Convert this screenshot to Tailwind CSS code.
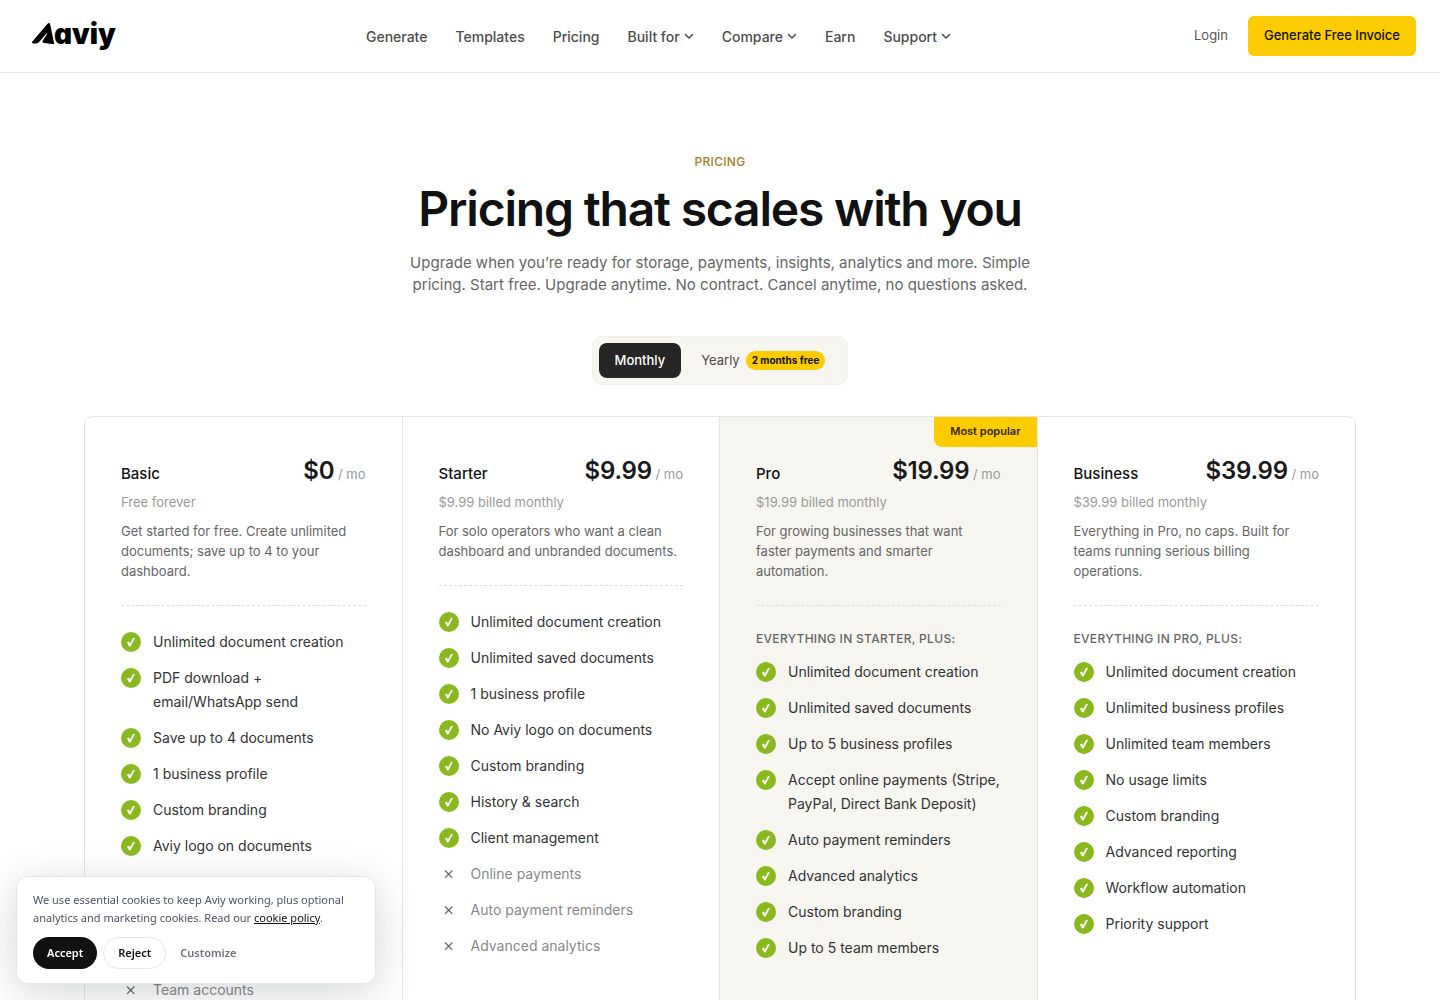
<!DOCTYPE html>
<html lang="en">
<head>
    <meta charset="UTF-8">
    <meta name="viewport" content="width=device-width, initial-scale=1.0">
    <title>Pricing - Aaviy</title>
    <script src="https://cdn.jsdelivr.net/npm/@tailwindcss/browser@4"></script>
</head>
<body class="bg-white font-[Inter,sans-serif] text-[#111111] overflow-x-hidden">
    <!-- shared icons -->
    <svg class="hidden">
        <symbol id="check" viewBox="0 0 20 20">
            <circle cx="10" cy="10" r="10" fill="#8ab81f"/>
            <path d="M5.9 10.5 7.9 9.6 9 11.4 11.7 6.4Q12.5 5.3 14 5.9L9.7 13.9Q8.8 15 7.9 13.9Z" fill="#fff"/>
        </symbol>
        <symbol id="cross" viewBox="0 0 20 20">
            <path d="M6 6.5 13.4 13.9M13.4 6.5 6 13.9" fill="none" stroke="#666" stroke-width="1.3"/>
        </symbol>
        <symbol id="chevron" viewBox="0 0 10 10">
            <path d="M1.5 2.5 5 6 8.5 2.5" fill="none" stroke="#4d4d4d" stroke-width="1.5" stroke-linecap="round" stroke-linejoin="round"/>
        </symbol>
    </svg>

    <!-- header -->
    <header class="h-[73px] border-b border-[#e5e5e5] flex items-center justify-between pl-8 pr-6">
        <a href="#" aria-label="Aaviy">
            <svg class="h-10 w-[91px] overflow-visible" viewBox="0 0 91 40">
                <path d="M.2 25.8 15.5 7.8Q17.7 6 18.2 8.5L22.3 28.3 12 26.9Q9.6 26.5 11 24.2L14.8 18.4Q15.8 16.5 14.2 17.8L7.4 25.8Q5.9 27.5 4 27.4L1 27.4Q-.6 27.2 .2 25.8Z" fill="#000"/>
                <text x="22" y="28" font-size="28" font-weight="900" font-family="Inter, sans-serif" class="[font-feature-settings:'cv11']">aviy</text>
            </svg>
        </a>
        <nav class="flex items-center gap-7 pt-0.5 text-sm font-medium text-[#4d4d4d]">
            <a href="#">Generate</a>
            <a href="#">Templates</a>
            <a href="#">Pricing</a>
            <button class="flex items-center gap-1">Built for <svg class="size-[10px]"><use href="#chevron"/></svg></button>
            <button class="flex items-center gap-1">Compare <svg class="size-[10px]"><use href="#chevron"/></svg></button>
            <a href="#">Earn</a>
            <button class="flex items-center gap-1">Support <svg class="size-[10px]"><use href="#chevron"/></svg></button>
        </nav>
        <div class="flex items-center gap-5 text-[13px]">
            <a href="#" class="text-[#555555]">Login</a>
            <a href="#" class="flex h-10 items-center rounded-md bg-[#fccb00] px-4 font-medium">Generate Free Invoice</a>
        </div>
    </header>
    <!-- end of header -->

    <main class="px-[84px] pt-20">
        <!-- intro -->
        <div class="flex flex-col items-center text-center">
            <p class="text-xs leading-[18px] font-medium tracking-wide text-[#a67c1a]">PRICING</p>
            <h1 class="mt-3 text-5xl leading-[52px] font-semibold tracking-tight">Pricing that scales with you</h1>
            <p class="mt-[17px] max-w-[640px] text-[15px] leading-[22px] text-[#666666]">Upgrade when you’re ready for storage, payments, insights, analytics and more. Simple pricing. Start free. Upgrade anytime. No contract. Cancel anytime, no questions asked.</p>
            <div class="mt-10 flex h-[49px] items-center rounded-[10px] border border-[#f3f1eb] bg-[#f6f5f0] px-1.5 text-[13px]">
                <button class="h-[35px] rounded-lg bg-[#262626] px-4 font-medium text-white">Monthly</button>
                <button class="flex h-[35px] items-center gap-1.5 pl-5 pr-4 text-[#4d4d4d]">Yearly
                    <span class="rounded-full bg-[#fccb00] px-1.5 text-[10px] leading-[19px] font-bold text-[#111111]">2 months free</span>
                </button>
            </div>
        </div>
        <!-- end of intro -->

        <!-- plans -->
        <div class="mt-[31px] grid grid-cols-4 divide-x divide-[#e5e5e5] overflow-hidden rounded-t-lg border border-[#e5e5e5]" id="plans"></div>
        <!-- end of plans -->
    </main>

    <!-- cookie box -->
    <div class="fixed bottom-4 left-4 w-[360px] rounded-xl border border-gray-200 bg-white px-4 py-3.5 font-['Noto_Sans',sans-serif] text-[11px] shadow-[0_8px_40px_rgba(17,24,39,0.18)]">
        <p class="leading-[18px] text-gray-600">We use essential cookies to keep Aviy working, plus optional analytics and marketing cookies. Read our <a href="#" class="text-[#111111] underline">cookie policy</a>.</p>
        <div class="mt-2.5 flex gap-1.5 font-semibold">
            <button class="h-8 rounded-full bg-[#111111] px-3.5 text-white">Accept</button>
            <button class="h-8 rounded-full border border-gray-200 px-3.5">Reject</button>
            <button class="h-8 px-2 text-gray-500">Customize</button>
        </div>
    </div>
    <!-- end of cookie box -->

    <script>
        const plans = [
            {
                name: 'Basic', price: '$0', billed: 'Free forever',
                text: 'Get started for free. Create unlimited documents; save up to 4 to your dashboard.',
                yes: ['Unlimited document creation', 'PDF download + email/WhatsApp send', 'Save up to 4 documents', '1 business profile', 'Custom branding', 'Aviy logo on documents'],
                no: ['Online payments', 'Auto payment reminders', 'Advanced analytics', 'Team accounts']
            },
            {
                name: 'Starter', price: '$9.99', billed: '$9.99 billed monthly',
                text: 'For solo operators who want a clean dashboard and unbranded documents.',
                yes: ['Unlimited document creation', 'Unlimited saved documents', '1 business profile', 'No Aviy logo on documents', 'Custom branding', 'History & search', 'Client management'],
                no: ['Online payments', 'Auto payment reminders', 'Advanced analytics']
            },
            {
                name: 'Pro', price: '$19.99', billed: '$19.99 billed monthly', popular: true,
                text: 'For growing businesses that want faster payments and smarter automation.',
                plus: 'EVERYTHING IN STARTER, PLUS:',
                yes: ['Unlimited document creation', 'Unlimited saved documents', 'Up to 5 business profiles', 'Accept online payments (Stripe, PayPal, Direct Bank Deposit)', 'Auto payment reminders', 'Advanced analytics', 'Custom branding', 'Up to 5 team members'],
                no: []
            },
            {
                name: 'Business', price: '$39.99', billed: '$39.99 billed monthly',
                text: 'Everything in Pro, no caps. Built for teams running serious billing operations.',
                plus: 'EVERYTHING IN PRO, PLUS:',
                yes: ['Unlimited document creation', 'Unlimited business profiles', 'Unlimited team members', 'No usage limits', 'Custom branding', 'Advanced reporting', 'Workflow automation', 'Priority support'],
                no: []
            }
        ];

        const row = (text, icon, color) => `
            <li class="flex gap-3 ${color}">
                <svg class="mt-0.5 size-5 shrink-0"><use href="#${icon}"/></svg>
                <span>${text}</span>
            </li>`;

        document.getElementById('plans').innerHTML = plans.map(p => `
            <section class="relative px-9 pt-9 pb-10 ${p.popular ? 'bg-[#f6f5f0]' : ''}">
                ${p.popular ? '<div class="absolute top-0 right-0 rounded-bl-lg bg-[#fccb00] px-4 pb-0.5 text-[11px] leading-7 font-semibold text-[#332900]">Most popular</div>' : ''}
                <div class="flex items-baseline justify-between">
                    <h2 class="text-[15px] font-medium">${p.name}</h2>
                    <div class="text-[13px] text-[#999999]"><span class="text-2xl leading-9 font-semibold tracking-[-0.01em] text-[#1a1a1a]">${p.price}</span> / mo</div>
                </div>
                <p class="mt-[3px] text-[13px] leading-5 text-[#999999]">${p.billed}</p>
                <p class="mt-[9px] text-[13px] leading-5 text-[#666666]">${p.text}</p>
                <hr class="my-6 border-dashed border-[#dddddd]">
                ${p.plus ? `<p class="mb-3 text-xs leading-[18px] font-medium tracking-wide text-[#666666]">${p.plus}</p>` : ''}
                <ul class="flex flex-col gap-3 text-sm leading-6">
                    ${p.yes.map(t => row(t, 'check', 'text-[#333333]')).join('')}
                    ${p.no.map(t => row(t, 'cross', 'text-[#888888]')).join('')}
                </ul>
            </section>`).join('');
    </script>
</body>
</html>
